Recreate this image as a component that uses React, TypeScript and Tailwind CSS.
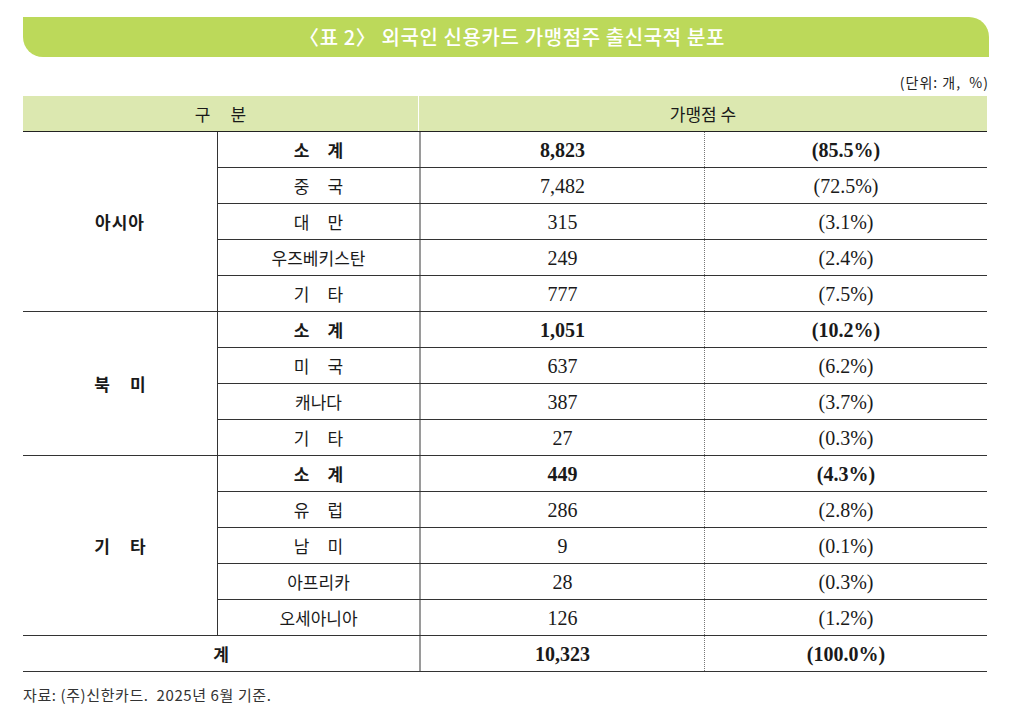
const kr = { fontFamily: '"Noto Sans CJK KR", "Noto Sans", sans-serif' };
const num = { fontFamily: '"Liberation Serif", "Noto Sans CJK KR", serif' };

interface Row {
  name: string;
  count: string;
  pct: string;
  spaced?: boolean;
  bold?: boolean;
}

interface Group {
  label: string;
  spacedLabel?: boolean;
  rows: Row[];
}

const groups: Group[] = [
  {
    label: "아시아",
    rows: [
      { name: "소계", count: "8,823", pct: "(85.5%)", spaced: true, bold: true },
      { name: "중국", count: "7,482", pct: "(72.5%)", spaced: true },
      { name: "대만", count: "315", pct: "(3.1%)", spaced: true },
      { name: "우즈베키스탄", count: "249", pct: "(2.4%)" },
      { name: "기타", count: "777", pct: "(7.5%)", spaced: true },
    ],
  },
  {
    label: "북미",
    spacedLabel: true,
    rows: [
      { name: "소계", count: "1,051", pct: "(10.2%)", spaced: true, bold: true },
      { name: "미국", count: "637", pct: "(6.2%)", spaced: true },
      { name: "캐나다", count: "387", pct: "(3.7%)" },
      { name: "기타", count: "27", pct: "(0.3%)", spaced: true },
    ],
  },
  {
    label: "기타",
    spacedLabel: true,
    rows: [
      { name: "소계", count: "449", pct: "(4.3%)", spaced: true, bold: true },
      { name: "유럽", count: "286", pct: "(2.8%)", spaced: true },
      { name: "남미", count: "9", pct: "(0.1%)", spaced: true },
      { name: "아프리카", count: "28", pct: "(0.3%)" },
      { name: "오세아니아", count: "126", pct: "(1.2%)" },
    ],
  },
];

// "소계" -> "소 계" style letter spacing used in the table
const Spaced = ({ text, gap = "tracking-[18px] pl-[18px]" }: { text: string; gap?: string }) => (
  <span className={gap}>{text}</span>
);

const App = () => {
  return (
    <div className="w-[1012px] h-[712px] bg-white px-[23px] pt-[17px] text-[#1a1a1a]" style={kr}>
      <div className="h-[40px] bg-[#bcd95a] rounded-bl-[20px] rounded-tr-[20px] flex items-center justify-center">
        <span className="text-white text-[20px] tracking-[0.6px] font-medium pl-[12px]" style={kr}>
          〈표 2〉 외국인 신용카드 가맹점주 출신국적 분포
        </span>
      </div>

      <div className="mt-[14px] h-[23px] flex justify-end items-center text-[14px] tracking-[1px] text-[#222]">
        (단위: 개,&nbsp; %)
      </div>

      <div className="w-[964px] mt-[2px]">
        <div className="h-[35px] flex bg-[#dce8b0] text-[17px]">
          <div className="w-[396px] flex items-center justify-center border-r border-white">
            <Spaced text="구분" gap="tracking-[20px] pl-[20px]" />
          </div>
          <div className="flex-1 flex items-center justify-center">가맹점 수</div>
        </div>

        <div className="border-t border-[#222]">
          {groups.map((g) => (
            <div key={g.label} className="flex">
              <div className="w-[195px] border-r border-b border-[#333] flex items-center justify-center text-[17px] font-bold">
                {g.spacedLabel ? <Spaced text={g.label} gap="tracking-[20px] pl-[20px]" /> : <span className="tracking-[1px]">{g.label}</span>}
              </div>
              <div className="flex-1 flex flex-col">
                {g.rows.map((r, i) => (
                  <div key={i} className="h-[36px] flex border-b border-[#333]">
                    <div className={`w-[201px] flex items-center justify-center text-[17px] ${r.bold ? "font-bold" : ""}`}>
                      {r.spaced ? <Spaced text={r.name} /> : r.name}
                    </div>
                    <div
                      className={`w-[285px] border-l-2 border-[#9a9a9a] flex items-center justify-center text-[20px] ${r.bold ? "font-bold" : ""}`}
                      style={num}
                    >
                      {r.count}
                    </div>
                    <div
                      className={`flex-1 border-l border-dotted border-[#777] flex items-center justify-center text-[20px] ${r.bold ? "font-bold" : ""}`}
                      style={num}
                    >
                      {r.pct}
                    </div>
                  </div>
                ))}
              </div>
            </div>
          ))}

          <div className="h-[36px] flex border-b border-[#333]">
            <div className="w-[396px] flex items-center justify-center text-[17px] font-bold">계</div>
            <div className="w-[285px] border-l-2 border-[#9a9a9a] flex items-center justify-center text-[20px] font-bold" style={num}>
              10,323
            </div>
            <div className="flex-1 border-l border-dotted border-[#777] flex items-center justify-center text-[20px] font-bold" style={num}>
              (100.0%)
            </div>
          </div>
        </div>
      </div>

      <div className="mt-[12px] text-[15px] text-[#333] tracking-[0.6px]">자료: (주)신한카드.&nbsp; 2025년 6월 기준.</div>
    </div>
  );
};

export default App;
